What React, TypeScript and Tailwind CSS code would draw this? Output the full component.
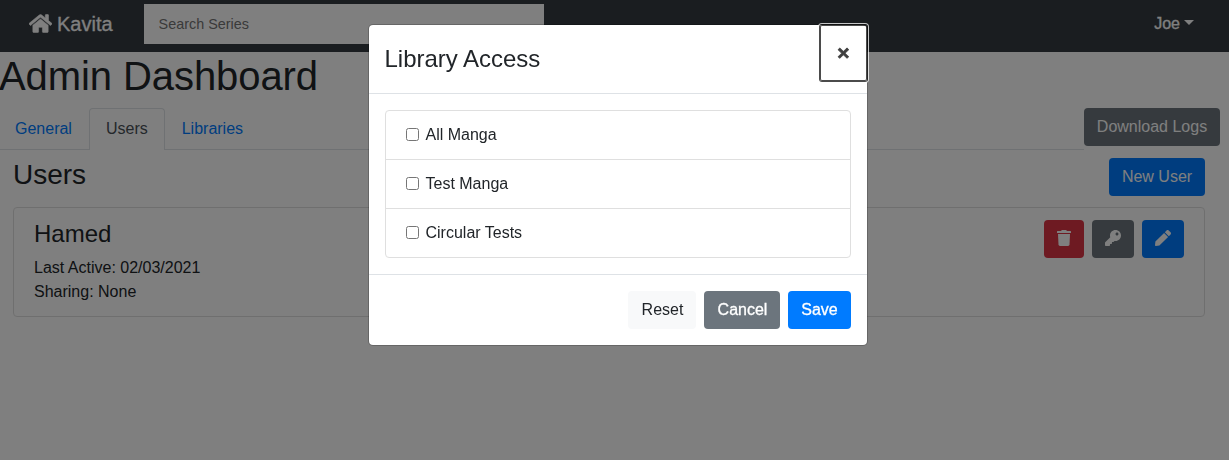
import { FaHome, FaKey, FaPen } from 'react-icons/fa';

const libraries = ['All Manga', 'Test Manga', 'Circular Tests'];
const button = 'h-[38px] whitespace-nowrap rounded-[4px] leading-6 pb-px flex items-center justify-center';

function TrashIcon() {
  return (
    <svg viewBox="0 0 14 16" className="h-4 w-[14px]" fill="currentColor" aria-hidden="true">
      <path d="M0 1.4Q0 1 .4 1H4l.4-.6Q4.600 0 5 0h4q.4 0 .6.4L10 1h3.600q.4 0 .4.4V3H0z" />
      <path d="M1 4h12l-.5 10.600q-.1 1.400-1.500 1.400H3q-1.400 0-1.500-1.400z" />
    </svg>
  );
}

function Navbar() {
  return (
    <header className="flex h-[52px] items-start bg-[#343a40] text-white">
      <a className="ml-[29px] mt-[9px] flex items-center text-[20px] leading-[30px] [-webkit-text-stroke:0.3px]">
        <FaHome className="mb-px mr-[5px] h-[21px] w-[23px] stroke-white [stroke-width:14px]" />
        Kavita
      </a>
      <input
        className="ml-[31px] mt-1 h-10 w-[400px] bg-white px-[15px] text-[14.4px] placeholder:text-[#757575]"
        placeholder="Search Series"
      />
      <button className="ml-auto mr-[35px] mt-3 flex items-center leading-6 [-webkit-text-stroke:0.3px]">
        Joe
        <span className="mb-1 ml-1 border-x-[5px] border-t-[5px] border-x-transparent border-t-white" />
      </button>
    </header>
  );
}

function Tabs() {
  return (
    <nav className="-ml-[2px] flex h-[42px] w-[1086px] border-b border-[#dee2e6] leading-6">
      <a className="px-[17px] pt-[9px] text-[#007bff]">General</a>
      <a className="h-[42px] rounded-t-[4px] border border-b-0 border-[#dee2e6] bg-white px-4 pt-2 text-[#495057]">
        Users
      </a>
      <a className="px-[17px] pt-[9px] text-[#007bff]">Libraries</a>
    </nav>
  );
}

function UserCard() {
  return (
    <section className="mt-[11px] flex h-[110px] justify-between rounded-[4px] border border-[#dfdfdf] px-5 py-3">
      <div className="leading-6">
        <h4 className="mb-[7px] text-[24px] leading-[28.8px]">Hamed</h4>
        <p>Last Active: 02/03/2021</p>
        <p>Sharing: None</p>
      </div>
      <div className="flex gap-2 text-white">
        <button className="flex h-[38px] w-10 items-center justify-center rounded-[4px] bg-[#dc3545] pb-[2px]">
          <TrashIcon />
        </button>
        <button className="flex h-[38px] w-[42px] items-center justify-center rounded-[4px] bg-[#6c757d] pb-[2px]">
          <FaKey className="size-4" />
        </button>
        <button className="flex h-[38px] w-[42px] items-center justify-center rounded-[4px] bg-[#007bff] pb-[2px]">
          <FaPen className="size-4" />
        </button>
      </div>
    </section>
  );
}

function LibraryModal() {
  return (
    <div className="fixed inset-0 bg-black/50">
      <div
        role="dialog"
        className="ml-[368px] mt-6 w-[500px] rounded-[5px] border border-black/20 bg-white bg-clip-padding"
      >
        <header className="flex h-[69px] items-start justify-between border-b border-[#dee2e6] pl-[15.5px]">
          <h4 className="mt-4 text-[24px] leading-9 tracking-[-0.02px]">Library Access</h4>
          <button
            aria-label="Close"
            className="flex h-14 w-[47px] justify-center rounded-[2px] pt-[15px] text-[21px] font-bold leading-[26px] text-black opacity-75 shadow-[0_0_0_1px_#101010,0_0_0_2px_#fff,inset_0_0_0_1px_#101010] [-webkit-text-stroke:0.7px]"
          >
            ×
          </button>
        </header>
        <div className="p-4">
          <ul className="divide-y divide-[#dfdfdf] rounded-[4px] border border-[#dfdfdf]">
            {libraries.map((name) => (
              <li key={name} className="flex h-[49px] items-start px-5 pt-3 last:h-12">
                <label className="flex items-center leading-6">
                  <input type="checkbox" className="mb-[2px] mr-[6.5px] size-[13px]" />
                  {name}
                </label>
              </li>
            ))}
          </ul>
        </div>
        <footer className="flex justify-end gap-2 border-t border-[#dee2e6] p-4">
          <button className={`${button} w-[68px] bg-[#f8f9fa] pl-px`}>Reset</button>
          <button className={`${button} w-[76px] bg-[#6c757d] pl-px text-white [-webkit-text-stroke:0.3px]`}>Cancel</button>
          <button className={`${button} w-[63px] bg-[#007bff] text-white [-webkit-text-stroke:0.3px]`}>Save</button>
        </footer>
      </div>
    </div>
  );
}

export default function App() {
  return (
    <div className="h-[460px] overflow-hidden bg-white font-['Liberation_Sans',Arial,sans-serif] text-[16px] text-[#212529]">
      <Navbar />
      <h1 className="-ml-px mb-2 text-[40px] leading-[48px] tracking-[-0.08px]">Admin Dashboard</h1>
      <div className="flex items-start">
        <Tabs />
        <button className={`${button} w-[136px] bg-[#6c757d] text-white`}>Download Logs</button>
      </div>
      <main className="ml-[13px] mt-2 w-[1192px]">
        <div className="flex items-start justify-between">
          <h3 className="text-[28px] leading-[33.6px]">Users</h3>
          <button className={`${button} w-24 bg-[#007bff] text-white`}>New User</button>
        </div>
        <UserCard />
      </main>
      <LibraryModal />
    </div>
  );
}
